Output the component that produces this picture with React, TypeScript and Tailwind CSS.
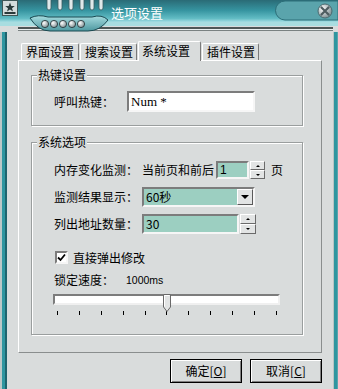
import React from 'react';

// Win9x-style skinned "选项设置" options dialog

function TitleBar() {
  return (
    <div className="relative h-[32px] shrink-0">
      <svg className="absolute inset-0" width="338" height="32" viewBox="0 0 338 32">
        <defs>
          <linearGradient id="tb" x1="0" y1="0" x2="0" y2="1">
            <stop offset="0" stopColor="#2a6b76" />
            <stop offset="0.45" stopColor="#3694a0" />
            <stop offset="0.8" stopColor="#62bcc4" />
            <stop offset="1" stopColor="#b6e6ea" />
          </linearGradient>
          <linearGradient id="pod" x1="0" y1="0" x2="0" y2="1">
            <stop offset="0" stopColor="#a6dcdf" />
            <stop offset="1" stopColor="#4e98a0" />
          </linearGradient>
          <radialGradient id="ball" cx="0.35" cy="0.35" r="0.7">
            <stop offset="0" stopColor="#ffffff" />
            <stop offset="1" stopColor="#7c8c90" />
          </radialGradient>
        </defs>
        <rect width="338" height="32" fill="#d9dcdc" />
        <rect width="338" height="23" fill="url(#tb)" />
        <rect x="0" y="22" width="338" height="4" fill="#a8dde0" />
        <rect x="18" y="27" width="315" height="2" fill="#4e5656" />
        <rect x="18" y="29" width="315" height="1" fill="#e8eeee" />
        <rect x="18" y="30" width="315" height="1" fill="#7a8282" />
        {/* right pill */}
        <path d="M285 1 H338 V20 H285 A9.5 9.5 0 0 1 285 1 Z" fill="#5aa4ac" stroke="#2c6e78" />
        {/* pod with balls */}
        <path d="M30 18 Q38 14 48 17 H92 Q102 14 108 20 Q100 31 88 31 H50 Q38 31 30 18 Z" fill="url(#pod)" stroke="#1a4a52" />
        {[45, 54, 63, 72, 81].map((cx) => (
          <circle key={cx} cx={cx} cy="24" r="3.6" fill="url(#ball)" stroke="#1e2e32" strokeWidth="0.8" />
        ))}
        {[47, 58, 69, 80, 90, 99].map((x) => (
          <rect key={x} x={x} y="-2" width="4" height="12" rx="2" fill="#dfe8ea" stroke="#3a5a60" strokeWidth="0.8" />
        ))}
        {/* app icon */}
        <rect x="2.5" y="0.5" width="15" height="15" fill="#d4dcdc" stroke="#3e5656" />
        <path d="M10 2.5 L11.3 6 L14.8 6 L12 8.2 L13 11.5 L10 9.4 L7 11.5 L8 8.2 L5.2 6 L8.7 6 Z" fill="#2a3a3a" />
        <rect x="4.5" y="12" width="11" height="2" fill="#2a3a3a" />
        {/* close */}
        <circle cx="325" cy="11" r="7" fill="url(#ball)" stroke="#4a6a70" />
        <path d="M321.5 7.5 L328.5 14.5 M328.5 7.5 L321.5 14.5" stroke="#4e5c60" strokeWidth="2.2" strokeLinecap="round" />
      </svg>
      <span className="absolute left-[111px] top-[5px] text-[13px] leading-[16px] text-white">选项设置</span>
    </div>
  );
}

function SpinSmall() {
  return (
    <div className="ml-[1px] flex h-[18px] w-[15px] flex-col">
      <div className="flex h-[9px] items-center justify-center border border-t-white border-l-white border-r-[#6a6a6a] border-b-[#6a6a6a] bg-[#e2e4e4]">
        <span className="h-0 w-0 border-x-[2px] border-b-[2px] border-x-transparent border-b-black" />
      </div>
      <div className="flex h-[9px] items-center justify-center border border-t-white border-l-white border-r-[#6a6a6a] border-b-[#6a6a6a] bg-[#e2e4e4]">
        <span className="h-0 w-0 border-x-[2px] border-t-[2px] border-x-transparent border-t-black" />
      </div>
    </div>
  );
}

function SpinLarge() {
  return (
    <div className="ml-[1px] flex h-[20px] w-[16px] flex-col">
      <div className="flex h-[10px] items-center justify-center border border-t-white border-l-white border-r-[#6a6a6a] border-b-[#6a6a6a] bg-[#e2e4e4]">
        <span className="h-0 w-0 border-x-[2px] border-b-[2px] border-x-transparent border-b-black" />
      </div>
      <div className="flex h-[10px] items-center justify-center border border-t-white border-l-white border-r-[#6a6a6a] border-b-[#6a6a6a] bg-[#e2e4e4]">
        <span className="h-0 w-0 border-x-[2px] border-t-[2px] border-x-transparent border-t-black" />
      </div>
    </div>
  );
}

export default function App() {
  const ticks = Array.from({ length: 11 });

  return (
    <div className="flex h-[389px] w-[338px] flex-col overflow-hidden bg-[#d9dcdc] font-['Noto_Sans_CJK_SC',sans-serif] text-[12px] text-black">
      <TitleBar />

      <div className="flex flex-1">
        {/* left skin edge */}
        <div className="flex w-[7px]">
          <div className="w-[2px] bg-[#bcc8c8]" />
          <div className="w-[3px] bg-[#2f96a0]" />
          <div className="w-[2px] bg-[#1e646e]" />
        </div>

        <div className="flex-1 px-[11px]">
          {/* tabs */}
          <div className="mt-[9px] flex h-[19px] items-end pl-[3px]">
            <div className="flex h-[17px] w-[58px] items-center rounded-t-[2px] border-t border-l border-r border-t-white border-l-white border-r-[#7a7a7a] pl-[4px] leading-none">界面设置</div>
            <div className="ml-[1px] flex h-[17px] w-[57px] items-center rounded-t-[2px] border-t border-l border-r border-t-white border-l-white border-r-[#7a7a7a] pl-[4px] leading-none">搜索设置</div>
            <div className="relative z-10 -mb-[1px] ml-[1px] flex h-[20px] w-[63px] items-start rounded-t-[2px] border-t border-l border-r border-t-white border-l-white border-r-[#7a7a7a] bg-[#d9dcdc] pl-[3px] pt-[3px] leading-none">系统设置</div>
            <div className="ml-[1px] flex h-[17px] w-[57px] items-center rounded-t-[2px] border-t border-l border-r border-t-white border-l-white border-r-[#7a7a7a] pl-[4px] leading-none">插件设置</div>
          </div>

          {/* tab panel */}
          <div className="h-[293px] border border-t-white border-l-white border-r-[#8a8e8e] border-b-[#8a8e8e] pl-[12px]">
            {/* 热键设置 */}
            <div className="relative mt-[14px] h-[51px] w-[272px] border border-[#9a9e9e] shadow-[1px_1px_0_#ffffff,inset_1px_1px_0_#ffffff]">
              <span className="absolute -top-[8px] left-[5px] bg-[#d9dcdc] px-[1px] leading-[14px]">热键设置</span>
              <div className="mt-[15px] flex h-[21px] items-center pl-[22px]">
                <span className="w-[73px] leading-none">呼叫热键：</span>
                <div className="flex h-[21px] w-[128px] items-center border-2 border-t-[#7c7c7c] border-l-[#7c7c7c] border-r-[#f6f6f6] border-b-[#f6f6f6] bg-white pl-[2px] font-['Liberation_Serif',serif] text-[13px] leading-none">
                  Num *
                </div>
              </div>
            </div>

            {/* 系统选项 */}
            <div className="relative mt-[16px] h-[193px] w-[272px] border border-[#9a9e9e] pl-[22px] pt-[18px] shadow-[1px_1px_0_#ffffff,inset_1px_1px_0_#ffffff]">
              <span className="absolute -top-[8px] left-[5px] bg-[#d9dcdc] px-[1px] leading-[14px]">系统选项</span>

              <div className="flex h-[18px] items-center leading-none">
                <span className="w-[88px]">内存变化监测：</span>
                <span>当前页和前后</span>
                <div className="ml-[2px] flex h-[18px] w-[33px] items-center border-2 border-t-[#7c7c7c] border-l-[#7c7c7c] border-r-[#f6f6f6] border-b-[#f6f6f6] bg-[#9ccfc1] pl-[2px] font-['Liberation_Sans',sans-serif]">1</div>
                <SpinSmall />
                <span className="ml-[6px]">页</span>
              </div>

              <div className="mt-[8px] flex h-[20px] items-center leading-none">
                <span className="w-[88px]">监测结果显示：</span>
                <div className="flex h-[20px] w-[113px] items-center justify-between border-2 border-t-[#7c7c7c] border-l-[#7c7c7c] border-r-[#f6f6f6] border-b-[#f6f6f6] bg-[#9ccfc1] pl-[2px]">
                  <span>60秒</span>
                  <div className="flex h-[16px] w-[16px] items-center justify-center border border-t-white border-l-white border-r-[#5a5a5a] border-b-[#5a5a5a] bg-[#e2e4e4]">
                    <span className="h-0 w-0 border-x-[4px] border-t-[4px] border-x-transparent border-t-black" />
                  </div>
                </div>
              </div>

              <div className="mt-[7px] flex h-[20px] items-center leading-none">
                <span className="w-[88px]">列出地址数量：</span>
                <div className="flex h-[20px] w-[97px] items-center border-2 border-t-[#7c7c7c] border-l-[#7c7c7c] border-r-[#f6f6f6] border-b-[#f6f6f6] bg-[#9ccfc1] pl-[2px]">30</div>
                <SpinLarge />
              </div>

              <div className="mt-[17px] flex h-[13px] items-center pl-[1px] leading-none">
                <div className="flex h-[13px] w-[13px] items-center justify-center border-2 border-t-[#7c7c7c] border-l-[#7c7c7c] border-r-[#f6f6f6] border-b-[#f6f6f6] bg-white">
                  <svg width="9" height="9" viewBox="0 0 9 9">
                    <path d="M1 4.5 L3.5 7 L8 1.5" fill="none" stroke="#000" strokeWidth="1.8" />
                  </svg>
                </div>
                <span className="ml-[5px]">直接弹出修改</span>
              </div>

              <div className="mt-[9px] flex h-[14px] items-center leading-none">
                <span className="w-[72px]">锁定速度：</span>
                <span className="font-['Liberation_Sans',sans-serif] text-[10.5px]">1000ms</span>
              </div>

              {/* slider */}
              <div className="relative -ml-[1px] mt-[7px] h-[23px] w-[227px]">
                <div className="mt-[2px] h-[11px] border-2 border-t-[#7c7c7c] border-l-[#7c7c7c] border-r-[#f0f0f0] border-b-[#f0f0f0] bg-white" />
                <svg className="absolute left-[110px] top-0" width="8" height="18" viewBox="0 0 8 18">
                  <path d="M0.5 0.5 H7.5 V13 L4 17.5 L0.5 13 Z" fill="#e2e4e4" stroke="#6a6a6a" />
                  <path d="M1.5 1.5 H6.5 M1.5 1.5 V12.5" stroke="#ffffff" />
                </svg>
                <div className="mt-[6px] flex justify-between pl-[4px] pr-[3px]">
                  {ticks.map((_, i) => (
                    <span key={i} className="h-[4px] w-[1px] bg-black" />
                  ))}
                </div>
              </div>
            </div>
          </div>

          {/* buttons */}
          <div className="mt-[6px] flex justify-end gap-[8px]">
            <button className="flex h-[24px] w-[72px] items-center justify-center border border-black bg-[#d9dcdc] leading-none shadow-[inset_1px_1px_0_#ffffff,inset_-1px_-1px_0_#808080]">
              确定[<span className="underline">O</span>]
            </button>
            <button className="flex h-[24px] w-[72px] items-center justify-center border border-black bg-[#d9dcdc] leading-none shadow-[inset_1px_1px_0_#ffffff,inset_-1px_-1px_0_#808080]">
              取消[<span className="underline">C</span>]
            </button>
          </div>
        </div>

        {/* right skin edge */}
        <div className="flex w-[5px]">
          <div className="w-[1px] bg-[#b8c4c4]" />
          <div className="w-[3px] bg-[#2f96a0]" />
          <div className="w-[1px] bg-[#5aa4ac]" />
        </div>
      </div>
    </div>
  );
}
